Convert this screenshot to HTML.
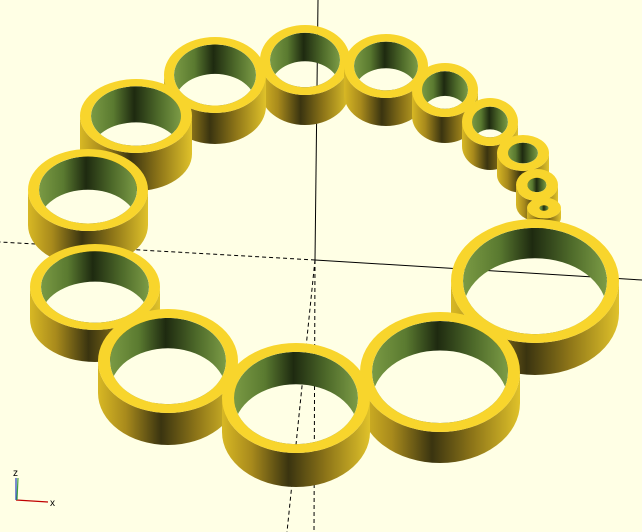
<!DOCTYPE html>
<html><head><style>html,body{margin:0;padding:0;background:#ffffe5;overflow:hidden}</style></head>
<body>
<svg id="s" width="642" height="532" xmlns="http://www.w3.org/2000/svg" style="display:block">
<defs>
<linearGradient id="side" x1="0" x2="1" y1="0" y2="0">
<stop offset="0" stop-color="#d8b824"/><stop offset="0.2" stop-color="#a88a1c"/><stop offset="0.45" stop-color="#3a3410"/><stop offset="0.7" stop-color="#8c7418"/><stop offset="1" stop-color="#e0c22a"/>
</linearGradient>
<linearGradient id="inn" x1="0" x2="1" y1="0" y2="0">
<stop offset="0" stop-color="#7a9a44"/><stop offset="0.25" stop-color="#5a7a30"/><stop offset="0.48" stop-color="#1e2a10"/><stop offset="0.75" stop-color="#4e6a2a"/><stop offset="1" stop-color="#7c9c46"/>
</linearGradient>
</defs>
<g stroke="#000" stroke-width="1" fill="none">
<line x1="315" y1="260" x2="642" y2="280"/>
<line x1="315" y1="260" x2="318" y2="0"/>
<line x1="315" y1="260" x2="0" y2="242" stroke-dasharray="4,3"/>
<line x1="315" y1="260" x2="287" y2="532" stroke-dasharray="4,3"/>
<line x1="315" y1="260" x2="314" y2="532" stroke-dasharray="4,3"/>
</g>
<g id="rings"></g>
<g stroke-width="1.2" fill="none">
<line x1="16" y1="500" x2="48" y2="502" stroke="#c00000"/>
<line x1="16" y1="500" x2="16" y2="478" stroke="#2040c0"/>
<line x1="17" y1="500" x2="18" y2="478" stroke="#40a040"/>
</g>
<text x="50" y="506" font-family="Liberation Sans, sans-serif" font-size="10" fill="#000">x</text>
<text x="13" y="476" font-family="Liberation Sans, sans-serif" font-size="10" fill="#000">z</text>
</svg>
<script>
var R=[
[305,60,45,35,10,30],[386,66,42,32,10,28],[215,75,51,38,10,31],[445,90,33,27,10,26],
[136,116,56,37,11,38],[490,122,28,24,10,24],[523,153,26,18,11,22],[537,185,21,16,11.5,20],
[88,190,60,41,11,35],[544,208,17,10.5,12.5,10],[535,281,84,62,12,32],[95,287,65,43,11,32],
[168,361,70,52,12,32],[440,372,80,60,12,31],[296,398,74,55,12,34]];
var ns="http://www.w3.org/2000/svg",g=document.getElementById('rings'),defs=document.querySelector('defs');
function el(n,a,p){var e=document.createElementNS(ns,n);for(var k in a)e.setAttribute(k,a[k]);(p||g).appendChild(e);return e;}
function ell(cx,cy,rx,ry){return 'M'+(cx-rx)+','+cy+' a'+rx+','+ry+' 0 1 0 '+(2*rx)+',0 a'+rx+','+ry+' 0 1 0 '+(-2*rx)+',0 Z ';}
R.forEach(function(r,i){
var cx=r[0],cy=r[1],rx=r[2],ry=r[3],t=r[4],h=r[5];
el('path',{d:'M'+(cx-rx)+','+cy+' A'+rx+','+ry+' 0 0 0 '+(cx+rx)+','+cy+' L'+(cx+rx)+','+(cy+h)+' A'+rx+','+ry+' 0 0 1 '+(cx-rx)+','+(cy+h)+' Z',fill:'url(#side)'});
var irx=rx-t,iry=Math.max(2,(ry*irxr(rx,t)));
function irxr(rx,t){return (rx-t)/rx;}
iry=ry*(rx-t)/rx+ (ry<30?0:0);
el('path',{'fill-rule':'evenodd',fill:'#f8d52c',d:ell(cx,cy,rx,ry)+ell(cx,cy,irx,iry)});
var cp=el('clipPath',{id:'c'+i},defs);
el('ellipse',{cx:cx,cy:cy,rx:irx,ry:iry},cp);
var s=h*0.95;
el('path',{'clip-path':'url(#c'+i+')','fill-rule':'evenodd',fill:'url(#inn)',d:ell(cx,cy,irx,iry)+ell(cx,cy+s,irx,iry)});
});
</script>
</body></html>
